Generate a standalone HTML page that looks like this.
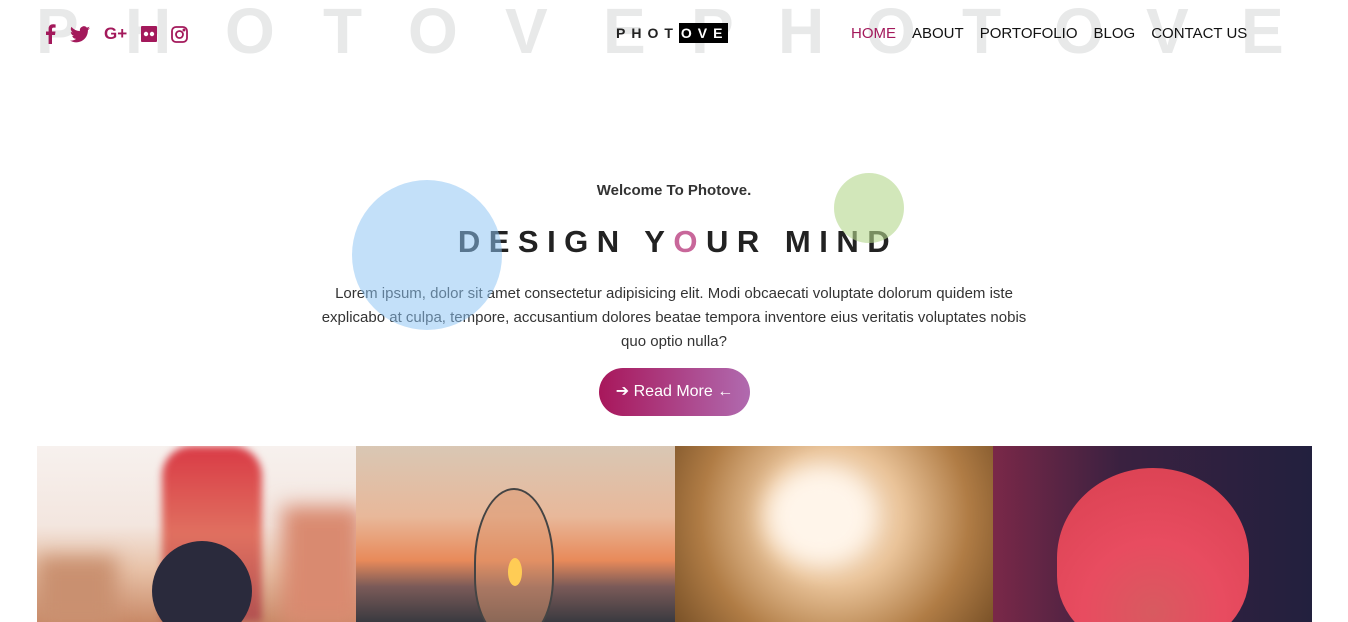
<!DOCTYPE html>
<html><head><meta charset="utf-8"><style>
*{margin:0;padding:0;box-sizing:border-box}
body{width:1348px;height:622px;overflow:hidden;background:#fff;font-family:"Liberation Sans",sans-serif;position:relative;color:#222}
.bg{position:absolute;top:-6px;left:36px;font-size:64px;font-weight:bold;color:#e8e9e9;white-space:nowrap}
.bg span{position:absolute;top:0}
.icons{position:absolute;top:24px;left:44px;display:flex;gap:14px;align-items:center;color:#a3195b}
.logo{position:absolute;left:616px;top:23px;height:20px;font-size:14px;font-weight:bold;letter-spacing:6px;display:flex;align-items:center}
.logo b{background:#000;color:#fff;padding:2px 0 2px 2px;height:20px;line-height:16px}
.nav{position:absolute;top:25px;left:851px;font-size:15px;display:flex;gap:16px;color:#111}
.nav span:first-child{color:#a3195b}
.c{position:absolute;border-radius:50%}
.w{position:absolute;top:182px;left:0;width:1348px;text-align:center;font-size:15px;font-weight:bold;color:#333}
.h{position:absolute;top:224px;left:0;width:1348px;text-align:center;font-size:31px;font-weight:bold;letter-spacing:8.5px;color:#222;padding-left:8px}
.p{position:absolute;top:282px;left:302px;width:744px;text-align:center;font-size:15px;line-height:24px;color:#333}
.btn{position:absolute;left:599px;top:368px;width:151px;height:48px;border-radius:24px;background:linear-gradient(90deg,#a8175b,#b06aaf);color:#fff;font-size:16px;text-align:center;line-height:47px}
.img{position:absolute;top:446px;height:176px;width:319px;overflow:hidden}
</style></head><body>
<div class="bg">
<span style="left:0">P</span><span style="left:89px">H</span><span style="left:189px">O</span><span style="left:287px">T</span><span style="left:372px">O</span><span style="left:469px">V</span><span style="left:567px">E</span><span style="left:655px">P</span>
<span style="left:742px">H</span><span style="left:830px">O</span><span style="left:926px">T</span><span style="left:1018px">O</span><span style="left:1110px">V</span><span style="left:1205px">E</span>
</div>
<div class="icons">
<svg width="12" height="20" viewBox="0 0 12 20"><path d="M8 20V11h3l.5-3.5H8V5.3c0-1 .3-1.7 1.8-1.7h1.8V.5C11 .4 10 .3 9 .3 6.5.3 4.6 1.8 4.6 4.6v2.9H2V11h2.6v9z" fill="#a3195b"/></svg>
<svg width="20" height="17" viewBox="0 0 24 20"><path d="M24 2.4c-.9.4-1.8.6-2.8.8 1-.6 1.8-1.6 2.2-2.7-1 .6-2 1-3.1 1.2A4.9 4.9 0 0 0 11.9 6 14 14 0 0 1 1.7.9a4.9 4.9 0 0 0 1.5 6.6c-.8 0-1.6-.3-2.2-.6 0 2.4 1.7 4.4 3.9 4.8-.7.2-1.5.2-2.2.1.6 2 2.4 3.4 4.6 3.4A9.9 9.9 0 0 1 0 17.2 14 14 0 0 0 7.5 19.4c9.1 0 14-7.5 14-14v-.6c1-.7 1.8-1.6 2.5-2.4z" fill="#a3195b"/></svg>
<span style="font-weight:bold;font-size:17px">G+</span>
<svg width="16" height="16"><rect width="16" height="16" rx="1" fill="#a3195b"/><circle cx="5" cy="8" r="2.2" fill="#fff"/><circle cx="11" cy="8" r="2.2" fill="#fff"/></svg>
<svg width="17" height="17" viewBox="0 0 17 17" fill="none" stroke="#a3195b" stroke-width="1.8"><rect x="1" y="1" width="15" height="15" rx="4"/><circle cx="8.5" cy="8.5" r="3.5"/><circle cx="13" cy="4" r=".6" fill="#a3195b"/></svg>
</div>
<div class="logo">PHOT<b>OVE</b></div>
<div class="nav"><span>HOME</span><span>ABOUT</span><span>PORTOFOLIO</span><span>BLOG</span><span>CONTACT US</span></div>
<div class="w">Welcome To Photove.</div>
<div class="h">DESIGN Y<span style="color:#c8679a">O</span>UR MIND</div>
<div class="p">Lorem ipsum, dolor sit amet consectetur adipisicing elit. Modi obcaecati voluptate dolorum quidem iste explicabo at culpa, tempore, accusantium dolores beatae tempora inventore eius veritatis voluptates nobis<br>quo optio nulla?</div>
<div class="c" style="left:352px;top:180px;width:150px;height:150px;background:rgba(140,196,243,.52)"></div>
<div class="c" style="left:834px;top:173px;width:70px;height:70px;background:rgba(180,215,140,.6)"></div>
<div class="btn">➔ Read More ←</div>
<div class="img" style="left:37px;background:linear-gradient(180deg,#f7f1ee 0%,#f3e6df 45%,#e8c2a8 70%,#c98a68 100%)">
<div style="position:absolute;left:125px;top:0;width:100px;height:176px;background:linear-gradient(180deg,#d93a45,#e07060 50%,#b05050);border-radius:30px 30px 0 0;filter:blur(4px)"></div>
<div style="position:absolute;left:115px;top:95px;width:100px;height:100px;border-radius:50%;background:#2a2a3c"></div>
<div style="position:absolute;left:245px;top:60px;width:80px;height:120px;background:#d98a70;filter:blur(10px)"></div>
<div style="position:absolute;left:0;top:110px;width:80px;height:70px;background:#c99070;filter:blur(10px)"></div>
</div>
<div class="img" style="left:356px;background:linear-gradient(180deg,#d9c7b4 0%,#e8b89a 40%,#e88a5a 65%,#7a5a58 80%,#3a3a40 100%)">
<div style="position:absolute;left:118px;top:42px;width:80px;height:150px;border-radius:50% 50% 40% 40%;border:2px solid #444;background:rgba(220,150,110,.5)"></div>
<div style="position:absolute;left:152px;top:112px;width:14px;height:28px;border-radius:50%;background:#ffcc55"></div>
</div>
<div class="img" style="left:675px;background:radial-gradient(circle at 50% 40%,#fbeee0 0%,#eac49a 35%,#b07c45 70%,#7a5228 100%)">
<div style="position:absolute;left:90px;top:20px;width:110px;height:100px;border-radius:50%;background:#fff5ea;filter:blur(12px)"></div>
</div>
<div class="img" style="left:993px;background:linear-gradient(90deg,#7a2848 0%,#3a2140 40%,#22203e 100%)">
<div style="position:absolute;left:64px;top:22px;width:192px;height:180px;border-radius:50% 50% 40% 40%;background:radial-gradient(circle at 50% 80%,#d85a60,#e84c60 40%,#d84050)"></div>
</div>
</body></html>
